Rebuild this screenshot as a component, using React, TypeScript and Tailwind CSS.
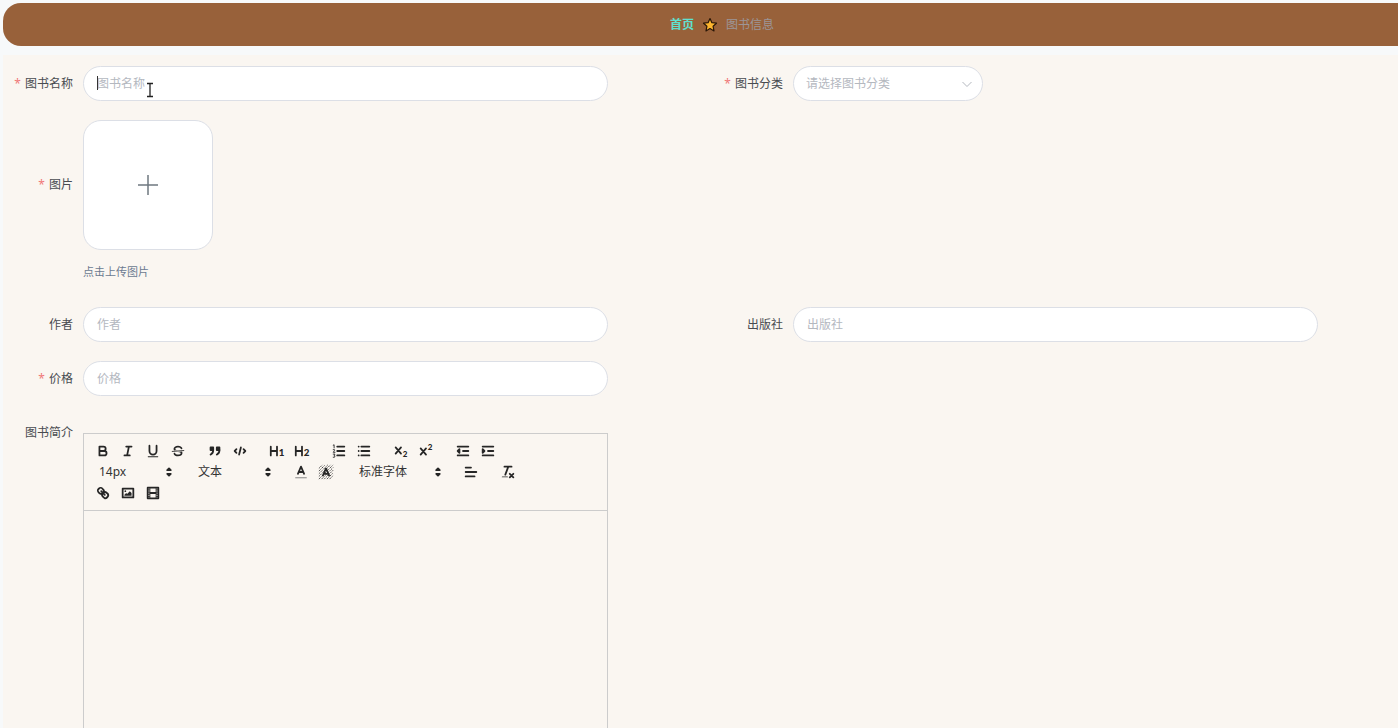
import { useState, type ReactNode } from 'react'

const INPUT = 'h-[35px] rounded-full border border-[#dcdfe6] bg-white px-[13px] text-xs text-[#606266] placeholder:text-[#b4b8bf] outline-none'

function Icon({ children }: { children: ReactNode }) {
  return (
    <svg viewBox="0 0 18 18" className="size-4" fill="none" stroke="#262626" strokeWidth={2} strokeLinecap="round" strokeLinejoin="round" aria-hidden="true">
      {children}
    </svg>
  )
}

const digit = { fill: '#262626', stroke: 'none', fontFamily: 'Lato, sans-serif', fontWeight: 900 }

const ICONS: Record<string, ReactNode> = {
  bold: <path d="M5 4h4.500a2.500 2.500 0 0 1 0 5H5V4ZM5 9h5.500a2.500 2.500 0 0 1 0 5H5V9Z" />,
  italic: <path d="M7 4h6M5 14h6M8 14l2-10" />,
  underline: (
    <>
      <path d="M5 3v6a4 4 0 0 0 8 0V3" />
      <rect x="3" y="15" width="12" height="1" rx=".5" fill="#262626" stroke="none" />
    </>
  ),
  strike: (
    <>
      <path d="M15.500 8.500l-13 1" strokeWidth={1} />
      <path
        stroke="none"
        fill="#262626"
        d="M9.007 8C6.542 7.791 6 7.519 6 6.500 6 5.792 7.283 5 9 5c1.571 0 2.765.679 2.969 1.309a1 1 0 0 0 1.900-.617C13.356 4.106 11.354 3 9 3 6.200 3 4 4.538 4 6.500a3.200 3.200 0 0 0 .5 1.843ZM8.984 10C11.457 10.208 12 10.479 12 11.500c0 .708-1.283 1.500-3 1.500-1.571 0-2.765-.679-2.969-1.309a1 1 0 1 0-1.900.617C4.644 13.894 6.646 15 9 15c2.800 0 5-1.538 5-3.500a3.200 3.200 0 0 0-.5-1.843Z"
      />
    </>
  ),
  quote: (
    <>
      <path d="M4 5h3v3H4zM11 5h3v3h-3z" fill="#262626" />
      <path d="M7 8c0 4-3 5-3 5M14 8c0 4-3 5-3 5" />
    </>
  ),
  code: <path d="M5 7L3 9l2 2M13 7l2 2-2 2M10 5L8 13" />,
  h1: (
    <>
      <path d="M2 4v10M9 4v10M2 9h7" />
      <text x="11" y="15" fontSize="11" {...digit}>1</text>
    </>
  ),
  h2: (
    <>
      <path d="M2 4v10M9 4v10M2 9h7" />
      <text x="11" y="15" fontSize="11" {...digit}>2</text>
    </>
  ),
  ordered: (
    <>
      <path d="M7 4h8M7 9h8M7 14h8" />
      <path d="M2.500 2.500l1-.5v3.500M2.500 7.500h1.500v1l-1.500 2h2M2.500 12.500h2l-1 1.500 1 .5-.5 1.500H2.500" strokeWidth={1} />
    </>
  ),
  bullet: <path d="M6 4h9M6 9h9M6 14h9M3 4h0M3 9h0M3 14h0" />,
  sub: (
    <>
      <path d="M3 5l6 7M9 5l-6 7" />
      <text x="11" y="16" fontSize="9" {...digit}>2</text>
    </>
  ),
  sup: (
    <>
      <path d="M3 6l6 7M9 6l-6 7" />
      <text x="11" y="8" fontSize="9" {...digit}>2</text>
    </>
  ),
  outdent: (
    <>
      <path d="M3 4h12M3 14h12M9 9h6" />
      <path d="M5 7v4L3 9z" fill="#262626" />
    </>
  ),
  indent: (
    <>
      <path d="M3 4h12M3 14h12M9 9h6" />
      <path d="M3 7v4l2-2z" fill="#262626" />
    </>
  ),
  color: (
    <>
      <path d="M3 15.500h12" strokeWidth={1} stroke="#777" />
      <path d="M5.500 11L9 3l3.500 8M11.600 9H6.400" />
    </>
  ),
  background: (
    <>
      <path
        d="M1 5l4-4M1 8l7-7M1 11L11 1M1 14L14 1M1 17L17 1M4 17L17 4M7 17L17 7M10 17l7-7M13 17l4-4"
        strokeWidth={1}
        strokeDasharray="1.500 1"
        strokeLinecap="butt"
      />
      <path d="M5.500 13L9 5l3.500 8M11.600 11H6.400" />
    </>
  ),
  align: <path d="M3 4h6M3 9h12M3 14h10" />,
  clean: (
    <>
      <path d="M5 3h8M6 12l3.350-9M11 11l4 4M15 11l-4 4" />
      <rect x="2" y="14" width="7" height="1" rx=".5" fill="#262626" stroke="none" />
    </>
  ),
  link: (
    <>
      <path d="M7 7l4 4" />
      <path d="M8.900 4.577a3.476 3.476 0 0 1 .36 4.679A3.476 3.476 0 0 1 4.577 8.900C3.185 7.500 2.035 6.400 4.217 4.217S7.500 3.185 8.900 4.577Z" />
      <path d="M13.423 9.100a3.476 3.476 0 0 0-4.679-.36 3.476 3.476 0 0 0 .36 4.679c1.392 1.392 2.500 2.542 4.679.36s1.392-3.279 0-4.679Z" />
    </>
  ),
  image: (
    <>
      <rect x="3" y="4" width="12" height="10" />
      <circle cx="6" cy="7" r="1" fill="#262626" stroke="none" />
      <path d="M5 12v-1l2-2 1 1 3-3 2 2v3z" fill="#262626" stroke="none" />
    </>
  ),
  video: (
    <>
      <rect x="3" y="3" width="12" height="12" />
      <path d="M5.500 3v12M12.500 3v12M3 5.500h2M3 8h2M3 10.500h2M3 13h2M13 5.500h2M13 8h2M13 10.500h2M13 13h2" strokeWidth={1} />
      <path d="M6 9h6" />
    </>
  ),
}

function Tools({ items }: { items: [string, string][] }) {
  return (
    <div className="flex">
      {items.map(([name, label]) => (
        <button key={name} type="button" aria-label={label} className="flex h-[21px] w-[25px] items-center justify-center">
          <Icon>{ICONS[name]}</Icon>
        </button>
      ))}
    </div>
  )
}

function Picker({ label, options, wide }: { label: string; options: string[]; wide?: boolean }) {
  return (
    <div className={`relative h-[21px] ${wide ? 'w-24' : 'w-[87px]'}`}>
      <select aria-label={label} className="block h-full w-full appearance-none bg-transparent pl-[9px] text-xs leading-4 text-[#333] outline-none">
        {options.map(o => <option key={o}>{o}</option>)}
      </select>
      <span className="pointer-events-none absolute inset-y-0 right-0 flex items-center">
        <Icon>
          <path d="M7 11l2 2 2-2zM7 7l2-2 2 2z" fill="#262626" />
        </Icon>
      </span>
    </div>
  )
}

function Field({ id, label, required, tall, children }: { id: string; label: string; required?: boolean; tall?: boolean; children: ReactNode }) {
  return (
    <div className="flex items-start">
      <label
        htmlFor={id}
        className={`flex w-20 shrink-0 items-center justify-end gap-1 pr-2.5 text-xs text-[#484b50] ${tall ? 'h-[130px]' : 'h-[35px]'}`}
      >
        {required && <span className="text-[#f07878]">*</span>}
        {label}
      </label>
      <div className="min-w-0 flex-1">{children}</div>
    </div>
  )
}

function Editor() {
  return (
    <div className="mt-[18px] w-5/6 border border-[#ccc]">
      <div className="border-b border-[#ccc] px-1.5 pt-1.5 pb-[7px]">
        <div className="flex gap-3">
          <Tools items={[['bold', '加粗'], ['italic', '斜体'], ['underline', '下划线'], ['strike', '删除线']]} />
          <Tools items={[['quote', '引用'], ['code', '代码']]} />
          <Tools items={[['h1', '标题一'], ['h2', '标题二']]} />
          <Tools items={[['ordered', '有序列表'], ['bullet', '无序列表']]} />
          <Tools items={[['sub', '下标'], ['sup', '上标']]} />
          <Tools items={[['outdent', '减少缩进'], ['indent', '增加缩进']]} />
        </div>
        <div className="flex gap-3">
          <Picker label="字号" options={['14px', '16px', '18px']} />
          <Picker label="段落" options={['文本', '标题1', '标题2']} />
          <Tools items={[['color', '文字颜色'], ['background', '背景颜色']]} />
          <Picker label="字体" options={['标准字体', '衬线字体', '等宽字体']} wide />
          <Tools items={[['align', '对齐']]} />
          <Tools items={[['clean', '清除格式']]} />
        </div>
        <Tools items={[['link', '链接'], ['image', '图片'], ['video', '视频']]} />
      </div>
      <textarea id="intro" className="block h-[350px] w-full resize-none bg-transparent p-3 text-xs outline-none" />
    </div>
  )
}

export default function App() {
  const [name, setName] = useState('')

  return (
    <div className="h-screen overflow-hidden bg-[#f7f9fa] pt-[3px] pl-[3px] font-['Noto_Sans','Noto_Sans_CJK_SC',sans-serif]">
      <div className="-mr-[25px]">
        <nav className="flex h-[43px] items-center justify-center gap-2 rounded-[18px] bg-[#98613a] pl-[18px] text-xs">
          <a href="#" className="font-bold text-[#5fe0d0]">首页</a>
          <svg viewBox="0 0 16 16" className="size-4" aria-hidden="true">
            <path
              d="M8 1.500l1.900 4.200 4.600.5-3.400 3.100.9 4.600L8 11.600l-4 2.300.9-4.600L1.500 6.200l4.600-.5z"
              fill="#fdb62f"
              stroke="#2b1708"
              strokeWidth="1.200"
              strokeLinejoin="round"
            />
          </svg>
          <span className="text-[#9c9698]">图书信息</span>
        </nav>

        <form className="mt-[9px] flex flex-col gap-[19px] bg-[#faf6f1] pt-[11px]" onSubmit={e => e.preventDefault()}>
          <div className="grid grid-cols-2">
            <Field id="name" label="图书名称" required>
              <div className="relative">
                <input id="name" value={name} onChange={e => setName(e.target.value)} placeholder="图书名称" className={`${INPUT} w-5/6`} />
                <span className="pointer-events-none absolute top-2.5 left-3.5 h-3.5 w-px bg-[#333]" />
                <svg viewBox="0 0 8 16" className="pointer-events-none absolute top-4 left-[63px] h-4 w-2" fill="none" stroke="#222" aria-hidden="true">
                  <path d="M1 1.500h6M4 2v12M1 14.500h6" strokeWidth="1.300" />
                </svg>
              </div>
            </Field>
            <Field id="category" label="图书分类" required>
              <div className="relative w-[190px]">
                <select id="category" defaultValue="" className="h-[35px] w-full appearance-none rounded-full border border-[#dcdfe6] bg-white px-3 text-xs text-[#b4b8bf] outline-none">
                  <option value="">请选择图书分类</option>
                </select>
                <svg viewBox="0 0 12 12" className="pointer-events-none absolute top-3 right-2.5 size-3" fill="none" stroke="#b4b8bf" aria-hidden="true">
                  <path d="M1.500 4L6 8.500 10.500 4" />
                </svg>
              </div>
            </Field>
          </div>

          <Field id="picture" label="图片" required tall>
            <button id="picture" type="button" aria-label="上传图片" className="flex size-[130px] items-center justify-center rounded-[18px] border border-[#dcdfe6] bg-white">
              <svg viewBox="0 0 20 20" className="size-5" fill="none" stroke="#6f7880" strokeWidth="1.500" aria-hidden="true">
                <path d="M10 0v20M0 10h20" />
              </svg>
            </button>
            <p className="mt-3 pb-1.5 text-[11px] leading-5 text-[#6b7a90]">点击上传图片</p>
          </Field>

          <div className="grid grid-cols-2">
            <Field id="author" label="作者">
              <input id="author" placeholder="作者" className={`${INPUT} w-5/6`} />
            </Field>
            <Field id="publisher" label="出版社">
              <input id="publisher" placeholder="出版社" className={`${INPUT} w-5/6`} />
            </Field>
          </div>

          <div className="grid grid-cols-2">
            <Field id="price" label="价格" required>
              <input id="price" placeholder="价格" className={`${INPUT} w-5/6`} />
            </Field>
          </div>

          <div className="grid grid-cols-2">
            <Field id="intro" label="图书简介">
              <Editor />
            </Field>
          </div>
        </form>
      </div>
    </div>
  )
}
